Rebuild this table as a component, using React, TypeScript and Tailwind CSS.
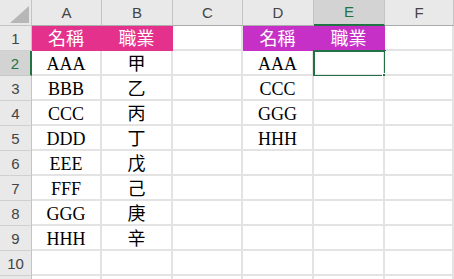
import React from "react";

const cols = ["A", "B", "C", "D", "E", "F"];
const colA = ["名稱", "AAA", "BBB", "CCC", "DDD", "EEE", "FFF", "GGG", "HHH", "", ""];
const colB = ["職業", "甲", "乙", "丙", "丁", "戊", "己", "庚", "辛", "", ""];
const colD = ["名稱", "AAA", "CCC", "GGG", "HHH", "", "", "", "", "", ""];
const colE = ["職業", "", "", "", "", "", "", "", "", "", ""];

const cellFont = "font-['Liberation_Serif','Noto_Sans_CJK_TC',serif] text-[18px] leading-[18px]";

function DataCell({ text, fill, selected }: { text: string; fill?: "pink" | "magenta"; selected?: boolean }) {
  const base = "relative flex items-end justify-center border-r-2 border-b-2 " + cellFont;
  let cls = base + " bg-white border-[#e3e3e3] text-black";
  if (fill === "pink") cls = base + " bg-[#e4318b] border-[#e4318b] text-white";
  if (fill === "magenta") cls = base + " bg-[#c630c6] border-[#c630c6] text-white";
  return (
    <div className={cls}>
      <span className="pb-[1px]">{text}</span>
      {selected && (
        <div className="absolute -top-[1px] -left-[1px] w-[73px] h-[27px] border-2 border-[#217346]">
          <div className="absolute -right-[4px] -bottom-[4px] w-[6px] h-[6px] bg-[#217346] border border-white" />
        </div>
      )}
    </div>
  );
}

export default function App() {
  const rows = Array.from({ length: 11 }, (_, i) => i);
  return (
    <div className="w-[454px] h-[279px] overflow-hidden bg-white">
      <div className="grid grid-cols-[32px_70px_71px_70px_71px_71px_1fr] grid-rows-[26px_repeat(11,25px)]">
        <div className="flex items-end justify-end bg-[#e9e9e9] border-r border-b border-[#c4c4c4] pr-[1px] pb-[1px]">
          <svg width="22" height="19" viewBox="0 0 22 19">
            <polygon points="21,1 21,18 2,18" fill="#b7b7b7" />
          </svg>
        </div>
        {cols.map((c) =>
          c === "E" ? (
            <div
              key={c}
              className="flex items-center justify-center bg-[#d3d3d3] border-r border-[#c4c4c4] border-b-2 border-b-[#217346] font-['Liberation_Sans',sans-serif] text-[15px] text-[#217346] pt-[1px]"
            >
              {c}
            </div>
          ) : (
            <div
              key={c}
              className="flex items-center justify-center bg-[#e9e9e9] border-r border-b border-[#c4c4c4] border-b-[#ababab] font-['Liberation_Sans',sans-serif] text-[15px] text-[#444444] pt-[1px]"
            >
              {c}
            </div>
          )
        )}
        {rows.map((r) => (
          <React.Fragment key={r}>
            {r === 1 ? (
              <div className="flex items-center justify-center bg-[#d3d3d3] border-r-2 border-r-[#217346] border-b border-b-[#c8c8c8] font-['Liberation_Sans',sans-serif] text-[15px] text-[#217346] pt-[3px]">
                {r + 1}
              </div>
            ) : (
              <div className="flex items-center justify-center bg-[#e9e9e9] border-r border-b border-[#d0d0d0] border-r-[#c4c4c4] font-['Liberation_Sans',sans-serif] text-[15px] text-[#444444] pt-[3px]">
                {r < 10 ? r + 1 : ""}
              </div>
            )}
            <DataCell text={colA[r]} fill={r === 0 ? "pink" : undefined} />
            <DataCell text={colB[r]} fill={r === 0 ? "pink" : undefined} />
            <DataCell text="" />
            <DataCell text={colD[r]} fill={r === 0 ? "magenta" : undefined} />
            <DataCell text={colE[r]} fill={r === 0 ? "magenta" : undefined} selected={r === 1} />
            <DataCell text="" />
          </React.Fragment>
        ))}
      </div>
    </div>
  );
}
